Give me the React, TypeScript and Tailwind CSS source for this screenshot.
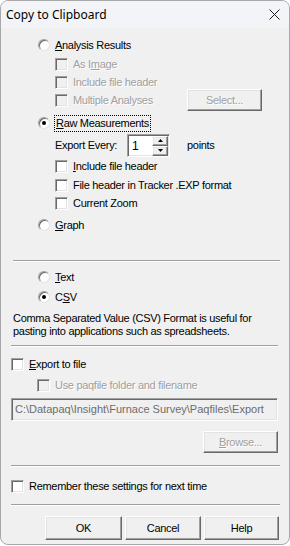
import React from 'react';

const SUNKEN =
  'border border-t-[#a0a0a0] border-l-[#a0a0a0] border-b-white border-r-white shadow-[inset_1px_1px_0_#696969,inset_-1px_-1px_0_#e3e3e3]';
const RAISED =
  'border border-t-white border-l-white border-r-[#696969] border-b-[#696969] shadow-[inset_-1px_-1px_0_#a0a0a0,inset_1px_1px_0_#e3e3e3] bg-[#f0f0f0]';
const GREY = 'text-[#a0a0a0] [text-shadow:1px_1px_0_#ffffff]';

const Radio: React.FC<{ checked?: boolean }> = ({ checked }) => (
  <span className="relative w-[12px] h-[12px] rounded-full bg-white border border-[#a0a0a0] border-b-[#e3e3e3] border-r-[#e3e3e3] shadow-[inset_1px_1px_0_#696969] shrink-0 flex items-center justify-center">
    {checked && <span className="w-[4px] h-[4px] rounded-full bg-black" />}
  </span>
);

const Check: React.FC<{ disabled?: boolean }> = ({ disabled }) => (
  <span className={`w-[13px] h-[13px] shrink-0 ${SUNKEN} ${disabled ? 'bg-[#f0f0f0]' : 'bg-white'}`} />
);

const Sep: React.FC<{ className?: string }> = ({ className = '' }) => (
  <div className={`h-[2px] border-t border-t-[#a0a0a0] border-b border-b-white ${className}`} />
);

const Btn: React.FC<{ label: React.ReactNode; disabled?: boolean; className?: string }> = ({ label, disabled, className = '' }) => (
  <div className={`shrink-0 flex items-center justify-center ${RAISED} ${disabled ? GREY : 'text-black'} ${className}`}>
    {label}
  </div>
);

const App: React.FC = () => {
  return (
    <div className="w-[290px] h-[546px] bg-white overflow-hidden">
      <div className="w-[290px] h-[545px] rounded-[8px] border border-[#a8a8a8] bg-[#f0f0f0] overflow-hidden flex flex-col font-['Liberation_Sans',Arial,sans-serif] text-[11px] tracking-[-0.3px] text-black">
        {/* title bar */}
        <div className="h-[27px] shrink-0 bg-[#f3f4f7] flex items-center justify-between pl-[5px] pr-[8px]">
          <span className="font-['Noto_Sans',sans-serif] text-[12px] tracking-normal text-black">Copy to Clipboard</span>
          <svg width="11" height="11" viewBox="0 0 11 11" className="mr-[1px]">
            <path d="M0.5 0.5L10.5 10.5M10.5 0.5L0.5 10.5" stroke="#1a1a1a" strokeWidth="1" />
          </svg>
        </div>

        <div className="flex flex-col">
          {/* analysis results */}
          <div className="mt-[8px] h-[18px] flex items-center pl-[37px] gap-[5px]">
            <Radio />
            <span><u>A</u>nalysis Results</span>
          </div>
          <div className="mt-[1px] h-[18px] flex items-center pl-[54px] gap-[5px]">
            <Check disabled />
            <span className={GREY}>As I<u>m</u>age</span>
          </div>
          <div className="h-[18px] flex items-center pl-[54px] gap-[5px]">
            <Check disabled />
            <span className={GREY}>Include file header</span>
          </div>
          <div className="h-[18px] flex items-center pl-[54px] gap-[5px]">
            <Check disabled />
            <span className={`${GREY} w-[109px] shrink-0`}>Multiple Analyses</span>
            <Btn label="Select..." disabled className="w-[75px] h-[22px]" />
          </div>

          {/* raw measurements */}
          <div className="mt-[5px] h-[18px] flex items-center pl-[37px] gap-[4px]">
            <Radio checked />
            <span className="px-[1px] leading-[15px] border border-dotted border-black"><u>R</u>aw Measurements</span>
          </div>
          <div className="mt-[2px] h-[23px] flex items-center pl-[54px]">
            <span className="w-[72px]">Export Every:</span>
            <div className={`w-[43px] h-[23px] bg-white flex items-center ${SUNKEN}`}>
              <span className="flex-1 pl-[4px] text-[12px]">1</span>
              <div className="flex flex-col mr-[1px]">
                <div className={`w-[16px] h-[10px] flex items-center justify-center ${RAISED}`}>
                  <svg width="5" height="3" viewBox="0 0 5 3"><path d="M2.5 0L5 3H0z" fill="#000" /></svg>
                </div>
                <div className={`w-[16px] h-[10px] flex items-center justify-center ${RAISED}`}>
                  <svg width="5" height="3" viewBox="0 0 5 3"><path d="M0 0H5L2.5 3z" fill="#000" /></svg>
                </div>
              </div>
            </div>
            <span className="ml-[17px]">points</span>
          </div>
          <div className="h-[18px] flex items-center pl-[54px] gap-[5px]">
            <Check />
            <span><u>I</u>nclude file header</span>
          </div>
          <div className="mt-[1px] h-[18px] flex items-center pl-[54px] gap-[5px]">
            <Check />
            <span>File header in Tracker .EXP format</span>
          </div>
          <div className="h-[18px] flex items-center pl-[54px] gap-[5px]">
            <Check />
            <span>Current Zoom</span>
          </div>
          <div className="mt-[4px] h-[18px] flex items-center pl-[37px] gap-[5px]">
            <Radio />
            <span><u>G</u>raph</span>
          </div>

          <Sep className="mt-[26px] ml-[12px] mr-[9px]" />

          {/* format */}
          <div className="mt-[6px] h-[18px] flex items-center pl-[37px] gap-[5px]">
            <Radio />
            <span><u>T</u>ext</span>
          </div>
          <div className="mt-[2px] h-[18px] flex items-center pl-[37px] gap-[5px]">
            <Radio checked />
            <span>C<u>S</u>V</span>
          </div>
          <p className="mt-[6px] pl-[12px] leading-[13px]">
            Comma Separated Value (CSV) Format is useful for
            <br />
            pasting into applications such as spreadsheets.
          </p>

          <Sep className="mt-[7px] ml-[10px] mr-[11px]" />

          {/* export */}
          <div className="mt-[8px] h-[18px] flex items-center pl-[10px] gap-[5px]">
            <Check />
            <span><u>E</u>xport to file</span>
          </div>
          <div className="mt-[3px] h-[18px] flex items-center pl-[36px] gap-[5px]">
            <Check disabled />
            <span className={GREY}>Use paqfile folder and filename</span>
          </div>
          <div className={`mt-[4px] ml-[10px] mr-[11px] h-[23px] flex items-center pl-[3px] bg-[#f0f0f0] ${SUNKEN}`}>
            <span className="text-[#6d6d6d] tracking-normal">C:\Datapaq\Insight\Furnace Survey\Paqfiles\Export</span>
          </div>
          <div className="mt-[10px] flex justify-end pr-[11px]">
            <Btn label={<span><u>B</u>rowse...</span>} disabled className="w-[75px] h-[22px]" />
          </div>

          <Sep className="mt-[12px] ml-[10px] mr-[9px]" />

          <div className="mt-[10px] h-[18px] flex items-center pl-[10px] gap-[5px]">
            <Check />
            <span>Remember these settings for next time</span>
          </div>

          <Sep className="mt-[9px] ml-[10px] mr-[9px]" />

          <div className="mt-[10px] flex justify-end gap-[3px] pr-[10px]">
            <Btn label="OK" className="w-[77px] h-[24px]" />
            <Btn label="Cancel" className="w-[76px] h-[24px]" />
            <Btn label="Help" className="w-[75px] h-[24px]" />
          </div>
        </div>
      </div>
    </div>
  );
};

export default App;
